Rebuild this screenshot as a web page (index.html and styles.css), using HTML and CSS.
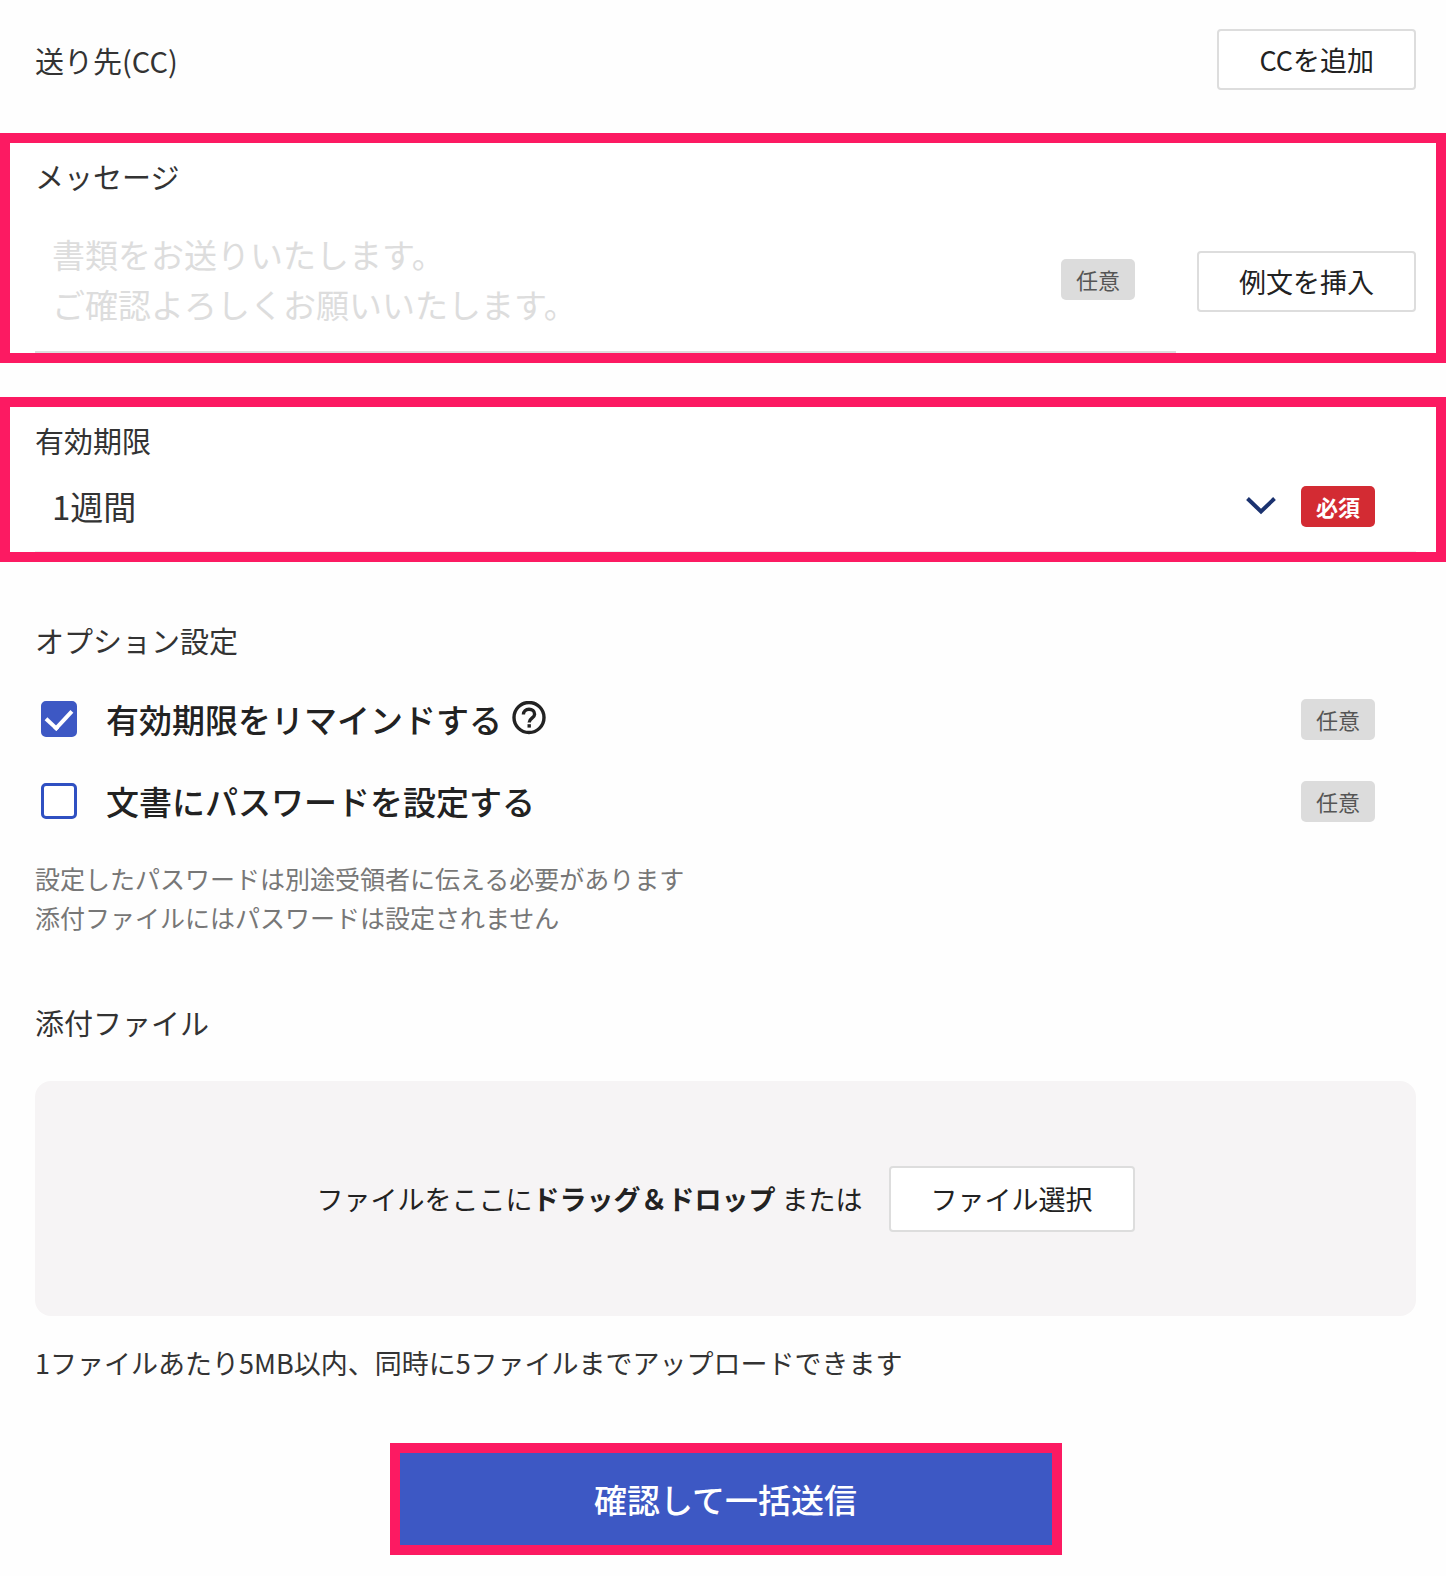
FILE: index.html
```html
<!DOCTYPE html>
<html lang="ja">
<head>
    <meta charset="UTF-8">
    <meta name="viewport" content="width=device-width, initial-scale=1.0">
    <title>一括送信</title>
    <link rel="stylesheet" href="styles.css">
</head>
<body>
    <form class="send-form">

        <!-- CC -->
        <section class="section cc-row">
            <h2 class="label">送り先(CC)</h2>
            <button type="button" class="btn">CCを追加</button>
        </section>

        <!-- Message -->
        <section class="highlight">
            <label class="label" for="message">メッセージ</label>
            <div class="message-row">
                <div class="field">
                    <textarea id="message" class="message" rows="2" placeholder="書類をお送りいたします。&#10;ご確認よろしくお願いいたします。"></textarea>
                    <span class="tag">任意</span>
                </div>
                <button type="button" class="btn">例文を挿入</button>
            </div>
        </section>

        <!-- Expiry -->
        <section class="highlight">
            <label class="label" for="expiry">有効期限</label>
            <div class="field field-select">
                <div class="select-wrap">
                    <select id="expiry" class="select">
                        <option>1週間</option>
                    </select>
                    <svg class="chevron" width="30" height="18" viewBox="0 0 30 18" fill="none" stroke="#1b326f" stroke-width="4" aria-hidden="true">
                        <path d="M1.5 1.5 L15 14.5 L28.5 1.5"/>
                    </svg>
                </div>
                <span class="tag tag-required">必須</span>
            </div>
        </section>

        <!-- Options -->
        <section class="section options">
            <h2 class="label">オプション設定</h2>
            <div class="option-list">
                <div class="option">
                    <input type="checkbox" id="remind" class="check" checked>
                    <label for="remind">有効期限をリマインドする</label>
                    <svg class="help" width="36" height="36" viewBox="0 0 36 36" fill="none" stroke="#222" stroke-width="3.4" aria-hidden="true">
                        <circle cx="18" cy="16.5" r="15"/>
                        <path d="M12.4 13.6 C12.4 10.2 14.8 8.3 18 8.3 C21.2 8.3 23.6 10.2 23.6 13.2 C23.6 17 18.2 17.4 18.2 21.4"/>
                        <path d="M18.2 23.2 V26.6"/>
                    </svg>
                    <span class="tag">任意</span>
                </div>
                <div class="option">
                    <input type="checkbox" id="password" class="check">
                    <label for="password">文書にパスワードを設定する</label>
                    <span class="tag">任意</span>
                </div>
            </div>
            <p class="hint">設定したパスワードは別途受領者に伝える必要があります<br>添付ファイルにはパスワードは設定されません</p>
        </section>

        <!-- Attachments -->
        <section class="section attachments">
            <h2 class="label">添付ファイル</h2>
            <div class="dropzone">
                <p>ファイルをここに<b>ドラッグ＆ドロップ</b> または</p>
                <button type="button" class="btn btn-file">ファイル選択</button>
            </div>
            <p class="note">1ファイルあたり5MB以内、同時に5ファイルまでアップロードできます</p>
        </section>

        <div class="section submit-row">
            <button type="submit" class="submit">確認して一括送信</button>
        </div>
    </form>
</body>
</html>
```
FILE: styles.css
```css
* { box-sizing: border-box; margin: 0; padding: 0; }

body {
    font-family: "Noto Sans CJK JP", "Noto Sans", sans-serif;
    font-size: 27px;
    line-height: 42px;
    color: #333;
    background-color: #fefefe;
}
button, select, textarea { font: inherit; color: inherit; }

/* --- Sections --- */
.section { padding: 0 30px 0 35px; }
.highlight {
    border: 10px solid #fc1a62;
    padding: 12px 20px 0 25px;
    background-color: #fff;
}
.highlight + .highlight { margin-top: 34px; }
.label { display: block; font-size: 29px; font-weight: 400; }

.cc-row {
    display: flex; justify-content: space-between; align-items: center;
    padding-top: 29px; padding-bottom: 43px;
}

/* --- Buttons and tags --- */
.btn {
    flex: none;
    padding: 8px 40px;
    border: 2px solid #ddd; border-radius: 4px;
    background-color: #fff; color: #222;
    line-height: 41px; white-space: nowrap;
    cursor: pointer;
}
.btn-file { line-height: 46px; }
.tag {
    flex: none;
    padding: 0 15px;
    border-radius: 5px;
    background-color: #dcdcdc; color: #555;
    font-size: 22px; line-height: 41px;
}
.tag-required { background-color: #d32b33; color: #fff; font-weight: 700; }

/* --- Fields --- */
.message-row { display: flex; align-items: center; gap: 21px; margin-top: 12px; }
.field {
    flex: 1;
    display: flex; align-items: center;
    padding: 20px 41px 22px 17px;
    border-bottom: 2px solid #ddd;
}
.message {
    flex: 1; min-width: 0; height: 100px;
    border: none; outline: none; resize: none; overflow: hidden;
    background: transparent;
    font-size: 33px; line-height: 50px;
}
.message::placeholder { color: #ddd; opacity: 1; }

.field-select { gap: 25px; padding-bottom: 20px; border-bottom: 1px solid #eee; }
.select-wrap { flex: 1; position: relative; }
.select {
    display: block; width: 100%;
    border: none; outline: none;
    appearance: none; -webkit-appearance: none;
    background: transparent;
    font-size: 33px; line-height: 50px;
}
/* arrow sits over the select */
.chevron { position: absolute; right: 0; top: 16px; pointer-events: none; }

/* --- Options --- */
.options { padding-top: 57px; }
.option-list { margin-top: 17px; }
.option {
    display: flex; align-items: center;
    height: 82px;
    padding: 0 41px 0 6px;
    color: #222; font-size: 33px; font-weight: 500;
}
.option .tag { margin-left: auto; font-weight: 400; }
.check {
    flex: none;
    width: 36px; height: 36px; margin-right: 29px;
    appearance: none; -webkit-appearance: none;
    border: 3px solid #2f50c2; border-radius: 5px;
    background-color: #fff;
}
.check:checked { background-color: #3d58c4; border-color: #3d58c4; }
.check:checked::before {
    content: ""; display: block;
    width: 12px; height: 21px; margin: 0 auto;
    border: solid #fff; border-width: 0 4px 4px 0;
    transform: rotate(43deg);
}
.help { flex: none; margin-left: 9px; }
.hint { margin-top: 17px; color: #777; font-size: 25px; line-height: 39px; }

/* --- Attachments --- */
.attachments { padding-top: 64px; }
.dropzone {
    display: flex; justify-content: center; align-items: center; flex-wrap: wrap; gap: 26px;
    min-height: 235px; margin-top: 38px;
    border-radius: 16px;
    background-color: #f6f4f5; color: #222;
}
.note { margin-top: 26px; }

/* --- Submit --- */
.submit-row { display: flex; justify-content: center; padding-top: 59px; padding-bottom: 21px; }
.submit {
    width: 100%; max-width: 672px; height: 112px;
    border: 10px solid #fc1a62;
    background-color: #3d58c4; color: #fff;
    font-size: 33px; font-weight: 500;
    cursor: pointer;
}
```
